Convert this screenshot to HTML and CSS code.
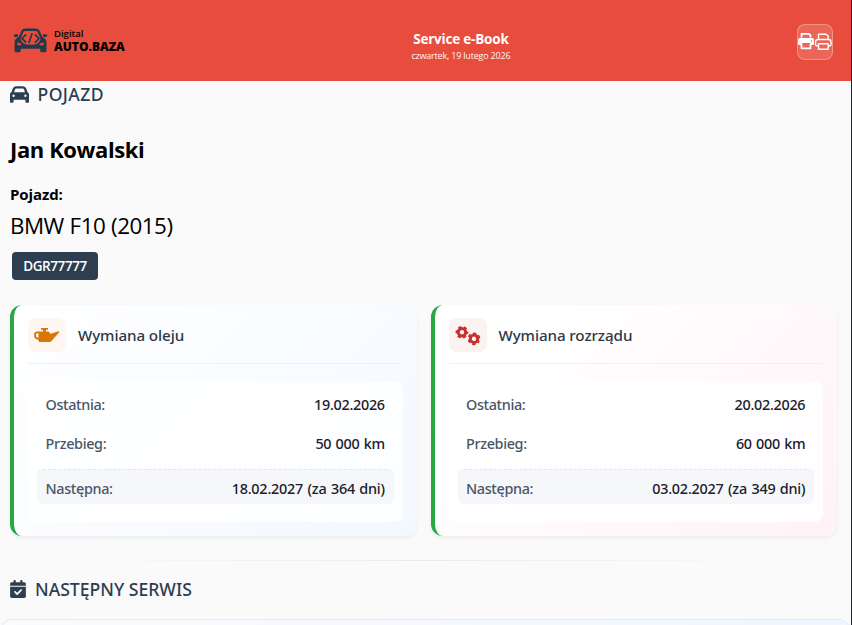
FILE: index.html
```html
<!DOCTYPE html>
<html lang="pl">
<head>
<meta charset="utf-8">
<title>Service e-Book</title>
<link rel="stylesheet" href="styles.css">
</head>
<body>
<div class="page">
<header class="topbar">
  <div class="brand">
    <svg class="brand-icon" viewBox="0 0 34 24">
      <path d="M6 10L9.5 2.6Q10.2 1.5 12 1.5H22Q23.8 1.5 24.5 2.6L28 10" fill="none" stroke="#24384b" stroke-width="2.3"/>
      <path d="M.5 6.500l4-.8.6 2.600-3.600.3zM33.500 6.500l-4-.8-.6 2.600 3.600.3z" fill="#24384b"/>
      <path d="M4.500 9H7q1 6 6 7h8q5-1 6-7h2.500q3 1.500 3 5v8q0 1.500-1.500 1.500h-3q-1.500 0-1.500-1.500V20H7.500v2q0 1.500-1.500 1.500H3Q1.500 23.500 1.500 22v-8q0-3.500 3-5z" fill="#24384b"/>
      <path d="M12.800 6l-4 4 4 4M21.200 6l4 4-4 4M18.600 5l-3.200 9.500" fill="none" stroke="#24384b" stroke-width="1.700"/>
      <path d="M4 14l4 .8v1.700H4.500zM30 14l-4 .8v1.700h3.500z" fill="#e74c3c"/>
    </svg>
    <div class="brand-text"><span class="brand-small">Digital</span><span class="brand-name">AUTO.BAZA</span></div>
  </div>
  <div class="title"><h1>Service e-Book</h1><p>czwartek, 19 lutego 2026</p></div>
  <button class="print" aria-label="Drukuj">
    <svg class="print-icon" viewBox="0 0 36 36">
      <path d="M4.500 13.500V9.800H12L13.500 11.300V13.500M4.500 19.500V24.300H13.500V19.500" fill="none" stroke="#fff" stroke-width="1.800" stroke-linejoin="round"/>
      <path d="M3 14h12q2 0 2 2v4q0 1-1 1h-2.500v-2h-9v2H2q-1 0-1-1v-4q0-2 2-2z" fill="#fff"/>
      <circle cx="14.500" cy="17" r=".7" fill="#e96b5e"/>
      <path d="M21.500 15.500V10.300H29L31.200 12V15.500M21.500 21.800H19.800Q18.600 21.800 18.600 20.600V18Q18.600 15.500 21 15.500H31.500Q34 15.500 34 18V20.600Q34 21.800 32.800 21.800H31.200M21.500 19.800H31.200V25.200H21.500Z" fill="none" stroke="#fff" stroke-width="1.400" stroke-linejoin="round"/>
    </svg>
  </button>
</header>
<main class="content">
  <h2 class="section-title vehicle-title">
    <svg class="car-icon" viewBox="0 0 512 512"><path fill="currentColor" d="M135.2 117.4L109.100 192H402.900l-26.100-74.600C372.300 104.600 360.200 96 346.600 96H165.400c-13.600 0-25.700 8.600-30.200 21.400zM39.600 196.800L74.800 96.300C88.300 57.800 124.600 32 165.400 32H346.600c40.800 0 77.100 25.800 90.600 64.300l35.200 100.500c23.200 9.600 39.600 32.500 39.600 59.200V448c0 17.700-14.300 32-32 32H448c-17.700 0-32-14.300-32-32V400H96v48c0 17.700-14.300 32-32 32H32c-17.700 0-32-14.300-32-32V256c0-26.700 16.400-49.600 39.600-59.200zM128 288a32 32 0 1 0-64 0 32 32 0 1 0 64 0zm288 32a32 32 0 1 0 0-64 32 32 0 1 0 0 64z"/></svg>
    <span>POJAZD</span>
  </h2>
  <section class="owner">
    <h3 class="owner-name">Jan Kowalski</h3>
    <div class="owner-label">Pojazd:</div>
    <div class="owner-car">BMW F10 (2015)</div>
    <div class="plate">DGR77777</div>
  </section>
  <section class="cards">
    <article class="card card-oil">
      <div class="card-head">
        <div class="card-icon">
          <svg class="card-svg" viewBox="0 0 38 34"><path fill="#d97706" fill-rule="evenodd" d="M13 10h7v1.800h-2V13.500h2.300l2.500 2.200 7.600-2.500q1.200 0 .7 1.300L25.300 21l-2 2.200q-.8.8-2 .8H12q-1.500 0-1.500-1.500V22L8 21q-1.800-.8-1.800-2.500V16q0-2.500 2.500-2.500H15V11.800h-2zM10.500 15.300H9q-1 0-1 1v1.800q0 .8.8 1.200l1.700.6z"/></svg>
        </div>
        <h4>Wymiana oleju</h4>
      </div>
      <dl class="panel">
        <div class="row"><dt>Ostatnia:</dt><dd>19.02.2026</dd></div>
        <div class="row"><dt>Przebieg:</dt><dd>50 000 km</dd></div>
        <div class="row next"><dt>Następna:</dt><dd>18.02.2027 (za 364 dni)</dd></div>
      </dl>
    </article>
    <article class="card card-belt">
      <div class="card-head">
        <div class="card-icon">
          <svg class="card-svg" viewBox="0 0 38 34">
            <g id="gear" fill="none" stroke="#c53030"><circle cx="13" cy="14.300" r="3.700" stroke-width="3"/><circle cx="13" cy="14.300" r="5.500" stroke-width="1.800" stroke-dasharray="3.100 2.660" stroke-dashoffset="1.550"/></g>
            <use href="#gear" transform="rotate(30 25 20.800) translate(12 6.500)"/>
          </svg>
        </div>
        <h4>Wymiana rozrządu</h4>
      </div>
      <dl class="panel">
        <div class="row"><dt>Ostatnia:</dt><dd>20.02.2026</dd></div>
        <div class="row"><dt>Przebieg:</dt><dd>60 000 km</dd></div>
        <div class="row next"><dt>Następna:</dt><dd>03.02.2027 (za 349 dni)</dd></div>
      </dl>
    </article>
  </section>
  <div class="divider"></div>
  <h2 class="section-title service-title">
    <svg class="cal-icon" viewBox="0 0 448 512"><path fill="currentColor" d="M128 0c17.700 0 32 14.300 32 32V64H288V32c0-17.700 14.300-32 32-32s32 14.300 32 32V64h48c26.500 0 48 21.500 48 48v48H0V112C0 85.500 21.500 64 48 64H96V32c0-17.700 14.300-32 32-32zM0 192H448V464c0 26.500-21.500 48-48 48H48c-26.500 0-48-21.500-48-48V192zM329 305c9.400-9.400 9.400-24.600 0-33.900s-24.600-9.400-33.900 0l-95 95-47-47c-9.400-9.400-24.600-9.400-33.900 0s-9.400 24.600 0 33.900l64 64c9.400 9.400 24.600 9.400 33.900 0L329 305z"/></svg>
    <span>NASTĘPNY SERWIS</span>
  </h2>
</main>
<div class="service-box"></div>
</div>
</body>
</html>
```
FILE: styles.css
```css
* { box-sizing: border-box; margin: 0; padding: 0; }
body { font-family: "Open Sans", "Noto Sans", sans-serif; color: #000; background: #fafafa; overflow: hidden; }
.page { height: 625px; border-right: 1px solid #1c2733; overflow: hidden; background: #fafafa; white-space: nowrap; }
svg { display: block; flex: none; }

.topbar { height: 81px; background: #e74c3c; display: flex; justify-content: space-between; align-items: center; padding: 3px 18px 0 13px; }
.brand { display: flex; align-items: center; gap: 6px; }
.brand-icon { width: 35px; height: 25px; margin-top: -3px; }
.brand-text { display: flex; flex-direction: column; margin-top: -4px; }
.brand-small { font-size: 9.500px; line-height: 12px; font-weight: 600; }
.brand-name { font-size: 12px; line-height: 13px; font-weight: 800; }
.title { text-align: center; color: #fff; padding-top: 8px; }
.title h1 { font-size: 13.500px; line-height: 18px; font-weight: 700; letter-spacing: -.2px; }
.title p { font-size: 9px; line-height: 15px; letter-spacing: -.2px; opacity: .95; }
.print { width: 36px; height: 36px; border: 1px solid rgba(255,255,255,.3); border-radius: 8px; background: rgba(255,255,255,.15); }
.print-icon { width: 36px; height: 36px; margin: -1px; }

.content { padding: 0 13px 0 10px; }
.section-title { display: flex; align-items: center; height: 26px; color: #2c3e50; font-family: "Noto Sans", sans-serif; font-size: 17.600px; font-weight: 500; }
.vehicle-title { letter-spacing: .4px; }
.car-icon { width: 19px; height: 19px; margin-right: 8.500px; }
.cal-icon { width: 16px; height: 18px; margin-right: 9px; }
.owner-name { margin-top: 25px; font-size: 22px; line-height: 34px; font-weight: 700; letter-spacing: -.4px; }
.owner-label { margin-top: 16px; font-size: 15px; line-height: 24px; font-weight: 700; letter-spacing: -.1px; }
.owner-car { margin-top: 3px; font-size: 22.400px; line-height: 34px; letter-spacing: -.5px; word-spacing: .5px; }
.plate { margin: 9px 0 0 2px; width: 86px; height: 28px; border-radius: 4px; background: #2c3e50; color: #fff; font-size: 13.500px; line-height: 28px; font-weight: 600; text-align: center; letter-spacing: -.4px; }

.cards { margin-top: 25px; display: grid; grid-template-columns: 1fr 1fr; gap: 14px; margin-right: 1px; }
.card { height: 231px; border-left: 4px solid #28a745; border-radius: 12px; padding: 13px 14px; box-shadow: 0 2px 4px rgba(0,0,0,.06); }
.card-oil { background: linear-gradient(135deg, #fff, #f3f8ff); }
.card-belt { background: linear-gradient(135deg, #fff 20%, #fff2f6); }
.card-head { height: 46px; display: flex; gap: 12px; border-bottom: 1px solid #eff1f5; }
.card-icon { width: 38px; height: 34px; border-radius: 8px; }
.card-oil .card-icon { background: #fdf6f1; }
.card-belt .card-icon { background: #fdf2f2; }
.card-svg { width: 38px; height: 34px; }
.card-head h4 { color: #2d3748; font-family: "Noto Sans", sans-serif; font-size: 15.200px; line-height: 34px; font-weight: 500; letter-spacing: -.1px; }
.panel { margin-top: 17px; height: 141px; border-radius: 8px; background: rgba(255,255,255,.8); padding: 4px 9px; }
.row { display: flex; align-items: center; justify-content: space-between; height: 39px; padding: 0 9px 0 8.500px; font-family: "Noto Sans", sans-serif; font-size: 14.400px; font-weight: 500; }
.row dt { color: #4a5568; letter-spacing: -.35px; }
.row dd { color: #1a202c; letter-spacing: -.3px; word-spacing: .9px; margin-right: -.3px; }
.next { margin-top: 6px; height: 35px; padding-top: 3px; border-top: 1px dashed #e1e6ec; border-radius: 6px; background: #f5f7fa; }
.next dd { letter-spacing: -.22px; }
.divider { height: 1px; margin: 24px 40px 0; background: linear-gradient(90deg, transparent, #e9ebee, transparent); }
.service-title { margin-top: 15px; }
.service-box { height: 40px; margin-top: 17px; border: 1px solid #e3ebf3; border-radius: 12px; background: linear-gradient(90deg, #f9fbfd, #eff6ff); }
```
